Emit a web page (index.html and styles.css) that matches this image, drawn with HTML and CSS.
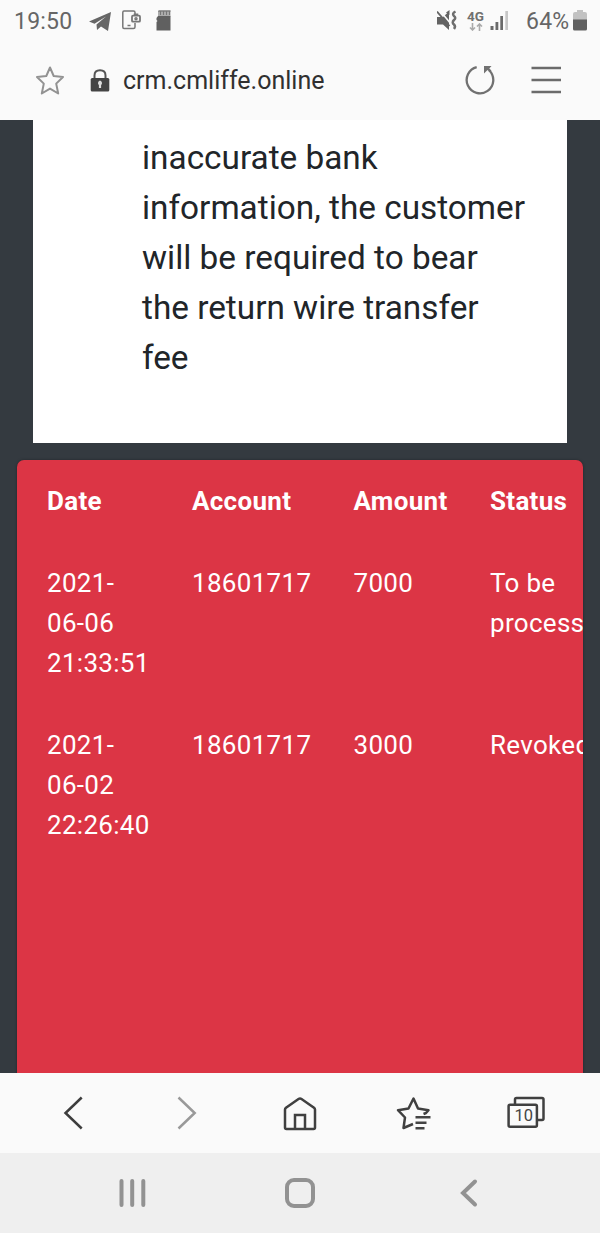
FILE: index.html
```html
<!DOCTYPE html>
<html lang="en">
<head>
<meta charset="utf-8">
<meta name="viewport" content="width=device-width">
<title>crm.cmliffe.online</title>
<link rel="stylesheet" href="styles.css">
</head>
<body>
<div class="phone">
  <header class="status">
    <span class="clock">19:50</span>
    <svg class="telegram" width="22" height="20" viewBox="0 0 22 20"><path d="M0 10.500L22 1L19 20L12 15.500L8 19L7.500 13.500L17 5.500L5.500 12.800Z" fill="#666"/></svg>
    <svg class="share" width="20" height="20" viewBox="0 0 20 20" fill="none" stroke="#777" stroke-width="1.500"><path d="M13 4V2.500Q13 1 11.500 1H2Q.8 1 .8 2.500V17Q.8 18.500 2 18.500H11.500Q13 18.500 13 17V13M5.500 15.500H8.500"/><rect x="10" y="5.700" width="8" height="6" rx="1" stroke-width="1.800"/><path d="M12.500 5.500V4.300H15.500V5.500"/><circle cx="14" cy="8.700" r="1"/></svg>
    <svg class="sdcard" width="15" height="21" viewBox="0 0 15 21"><path d="M3 0H14.500V6.500H2V2Z" fill="#aaa"/><path d="M2 6H14.500V20.500H.5V12L1.500 11L.5 10V8Z" fill="#606060"/><path d="M4.500 1V5M7.500 1V5M10.500 1V5M13.500 1V5M2 1.200H14.500" stroke="#777"/></svg>
    <svg class="mute" width="21" height="21" viewBox="0 0 21 21"><path d="M0 7H6L12 1.500V20L6 14.500H0Z" fill="#636363"/><path d="M2.500 0L14 14" stroke="#fafafa" stroke-width="1.600"/><path d="M0 1.500L12.500 16" stroke="#636363" stroke-width="1.800"/><path d="M12.500 0V5L9 2.500Z" fill="#636363"/><path d="M18.500 1.500Q14.500 3.500 17 6Q19.500 8 17 10Q14.500 12.500 17 14.500Q19 16.500 17 19" fill="none" stroke="#6e6e6e" stroke-width="2.500"/></svg>
    <span class="network"><span class="generation">4G</span><svg width="14" height="8" viewBox="0 0 14 8" fill="none" stroke="#aaa" stroke-width="1.600"><path d="M3.500 0V7M1 4.500L3.500 7L6 4.500M10.500 8V1M8 3.500L10.500 1L13 3.500"/></svg></span>
    <svg class="signal" width="19" height="19" viewBox="0 0 19 19"><path d="M.5 15H3.500V19H.5ZM5.500 11H8.300V19H5.500ZM10.300 5H13V19H10.300Z" fill="#696969"/><path d="M15.300 0H18V19H15.300Z" fill="#c6c6c6"/></svg>
    <span class="charge">64%</span>
    <svg class="battery" width="14" height="21" viewBox="0 0 14 21"><path d="M4 0H10V2H12Q14 2 14 4V10H0V4Q0 2 2 2H4Z" fill="#c2c2c2"/><path d="M0 9.500H14V19Q14 20.500 12.500 20.500H1.500Q0 20.500 0 19Z" fill="#616161"/></svg>
  </header>
  <div class="address">
    <svg class="bookmark" width="30" height="30" viewBox="0 0 30 30"><path d="M15 1.500L18.700 10L28 11L21.200 17.600L23.200 27.500L15 22.600L6.800 27.500L8.800 17.600L2 11L11.300 10Z" fill="none" stroke="#929292" stroke-width="2" stroke-linejoin="round"/></svg>
    <svg class="lock" width="20" height="23" viewBox="0 0 20 23"><path d="M4.500 10V6.500Q4.500 1.300 10 1.300T15.500 6.500V10" fill="none" stroke="#555" stroke-width="2"/><rect x=".7" y="9" width="18.600" height="13.500" rx="1.500" fill="#444"/><path d="M10 11.500A2.600 2.600 0 0 1 11.100 16V19H8.900V16A2.600 2.600 0 0 1 10 11.500Z" fill="#ddd"/></svg>
    <span class="url">crm.cmliffe.online</span>
    <svg class="reload" width="30" height="30" viewBox="0 0 30 30"><path d="M11.700 2.100A13.300 13.300 0 1 0 24.300 5.500" fill="none" stroke="#717171" stroke-width="2.300"/><path d="M19 1H26.500L24.300 3.500L26.500 5.500L24.500 7L22.500 5L19 8.500Z" fill="#717171"/></svg>
    <svg class="menu" width="30" height="28" viewBox="0 0 30 28"><path d="M.5 2H30M.5 14H30M.5 26H30" stroke="#6b6b6b" stroke-width="2.500"/></svg>
  </div>
  <main class="page">
    <section class="notice"><p class="notice-text">inaccurate bank information, the customer will be required to bear the return wire transfer fee</p></section>
    <section class="records">
      <div class="row head"><span>Date</span><span>Account</span><span>Amount</span><span>Status</span></div>
      <div class="row"><span>2021-<br>06-06<br>21:33:51</span><span>18601717</span><span>7000</span><span>To be<br>processed</span></div>
      <div class="row"><span>2021-<br>06-02<br>22:26:40</span><span>18601717</span><span>3000</span><span>Revoked</span></div>
    </section>
  </main>
  <nav class="toolbar">
    <svg width="36" height="36" viewBox="0 0 36 36"><path d="M26.200 2.500L10 18L26.200 33.500" transform="translate(-.5)" fill="none" stroke="#3d3d3d" stroke-width="2.500"/></svg>
    <svg width="36" height="36" viewBox="0 0 36 36"><path d="M9.500 2.500L25.700 18L9.500 33.500" fill="none" stroke="#999" stroke-width="2.500"/></svg>
    <svg width="36" height="36" viewBox="0 0 36 36"><path d="M3 14.500Q3 13.500 4 12.700L16.500 4Q18 3 19.500 4L32 12.700Q33 13.500 33 14.500V32.500Q33 34 31.500 34H4.500Q3 34 3 32.500ZM13 34V20H23V34" fill="none" stroke="#404040" stroke-width="2.500"/></svg>
    <svg width="36" height="36" viewBox="0 0 36 36"><path d="M18 29L8.500 33L10 22.500L3 15.200L13.500 13.500L18.500 3.500L23 13.500L33.500 15.200L31 18L28.500 19" fill="none" stroke="#404040" stroke-width="2.500" stroke-linejoin="round"/><path d="M20.500 22.200H35.500M20.500 27.800H31.500M20.500 33.300H29.500" stroke="#444" stroke-width="2.600"/></svg>
    <svg width="40" height="36" viewBox="0 0 40 36"><path d="M9 10V4.500Q9 3 10.500 3H36Q37.500 3 37.500 4.500V23.500Q37.500 25 36 25H32" fill="none" stroke="#404040" stroke-width="2.500"/><rect x="2.600" y="9.700" width="28.300" height="22" rx="1.500" fill="none" stroke="#404040" stroke-width="2.500"/><text x="17.800" y="26" class="tab-count">10</text></svg>
  </nav>
  <footer class="system">
    <svg width="30" height="30" viewBox="0 0 30 30"><path d="M4.500 3V27M15.200 3V27M26.300 3V27" fill="none" stroke="#929292" stroke-width="4" stroke-linecap="round"/></svg>
    <svg width="32" height="32" viewBox="0 0 32 32"><rect x="3" y="3" width="26" height="26" rx="7" fill="none" stroke="#929292" stroke-width="4"/></svg>
    <svg width="32" height="32" viewBox="0 0 32 32"><path d="M22.500 4.500L10.500 16L22.500 27.500" transform="translate(.5)" fill="none" stroke="#929292" stroke-width="4" stroke-linecap="round"/></svg>
  </footer>
</div>
</body>
</html>
```
FILE: styles.css
```css
* { box-sizing: border-box; }
body { margin: 0; font-family: Roboto, "Liberation Sans", sans-serif; }
svg { display: block; flex: none; }
.phone { width: 600px; height: 1233px; display: flex; flex-direction: column; overflow: hidden; background: #fafafa; }
.status { height: 42px; flex: none; display: flex; align-items: center; padding-left: 14px; color: #666; font-size: 23px; line-height: 42px; }
.clock { width: 75px; padding-top: 2px; letter-spacing: .2px; }
.telegram { margin-top: -1px; }
.share { margin-left: 11px; margin-top: -2px; }
.sdcard { margin-left: 14px; margin-top: -2px; }
.mute { margin-left: 266px; margin-top: -2px; }
.network { width: 17px; margin-left: 9px; margin-top: -1px; display: flex; flex-direction: column; align-items: center; gap: 1px; }
.generation { font-size: 13.5px; line-height: 12px; font-weight: 700; color: #707070; }
.signal { margin-left: 6px; margin-top: -1px; }
.charge { width: 47px; margin-left: 17px; padding-top: 2px; letter-spacing: .2px; }
.battery { margin-top: -2px; }
.address { height: 78px; flex: none; display: flex; align-items: center; padding-left: 35px; }
.lock { margin-left: 25px; margin-top: -2px; }
.url { width: 342px; margin-left: 13px; font-size: 25px; line-height: 30px; color: #303030; }
.reload { margin-top: -3px; }
.menu { margin-left: 36px; margin-top: -2px; }
.page { height: 953px; flex: none; overflow: hidden; background: #343a40; padding: 0 17px; }
.notice { height: 323px; margin: 0 16px; padding: 13px 35px 0 109px; background: #fff; }
.notice-text { margin: 0; font-size: 33.33px; line-height: 50px; color: #212529; }
.records { height: 640px; margin-top: 17px; padding: 21px 0 0 30px; display: flex; flex-direction: column; gap: 42px; overflow: hidden; border-radius: 7px 7px 0 0; background: #dc3545; color: #fff; font-size: 26px; line-height: 40px; letter-spacing: .3px; box-shadow: 0 0 3px rgba(0,0,0,.35); }
.row { display: grid; grid-template-columns: 145px 161.5px 136.5px 160px; flex: none; }
.head { font-weight: 700; }
.toolbar { height: 80px; flex: none; display: grid; grid-template-columns: repeat(5, 1fr); place-items: center; padding: 0 17px; }
.tab-count { font-size: 16.5px; text-anchor: middle; fill: #444; }
.system { height: 80px; flex: none; display: grid; grid-template-columns: repeat(3, 1fr); place-items: center; padding: 0 48px; background: #efefef; }
```
